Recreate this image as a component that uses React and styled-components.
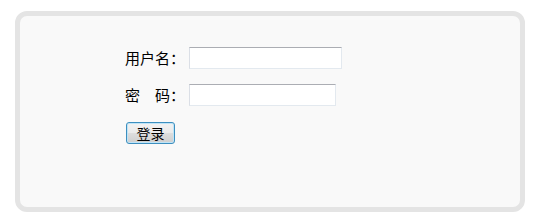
import styled, { createGlobalStyle } from 'styled-components'

const GlobalStyle = createGlobalStyle`
  html, body {
    margin: 0;
    padding: 0;
    background: #ffffff;
  }
  body {
    font-family: "Noto Sans CJK SC", "Liberation Sans", sans-serif;
  }
`

const Panel = styled.div`
  box-sizing: border-box;
  width: 510px;
  height: 201px;
  margin: 11px 0 0 15px;
  border: 5px solid #e4e4e4;
  border-radius: 12px;
  background: #f9f9f9;
  padding: 31px 0 0 105px;
`

const Form = styled.form`
  display: flex;
  flex-direction: column;
  align-items: flex-start;
  gap: 15px;
  margin: 0;
`

const Row = styled.div`
  display: flex;
  align-items: center;
  gap: 4px;
  height: 22px;
`

const Label = styled.label`
  width: 60px;
  font-size: 15px;
  line-height: 22px;
  color: #000;
  white-space: pre;
`

const Input = styled.input`
  box-sizing: border-box;
  width: ${p => p.$w}px;
  height: 22px;
  margin: 0;
  padding: 1px 3px;
  font-size: 13px;
  background: #fff;
  border: 1px solid #e3e9ef;
  border-top-color: #abadb3;
  border-left-color: #dbdfe6;
  outline: none;
`

const Button = styled.button`
  box-sizing: border-box;
  width: 49px;
  height: 22px;
  margin: 1px 0 0 1px;
  padding: 0;
  font-family: "Noto Sans CJK SC", sans-serif;
  font-size: 14px;
  line-height: 18px;
  color: #000;
  border: 1px solid #3d8fbf;
  border-radius: 3px;
  box-shadow: inset 0 0 0 1px #bfe4f7;
  background: linear-gradient(#f2f2f2 0%, #ebebeb 48%, #dddddd 52%, #cfcfcf 100%);
`

export default function App () {
  return (
    <>
      <GlobalStyle />
      <Panel>
        <Form onSubmit={e => e.preventDefault()}>
          <Row>
            <Label>用户名：</Label>
            <Input type='text' $w={153} />
          </Row>
          <Row>
            <Label>密　码：</Label>
            <Input type='password' $w={147} />
          </Row>
          <Button type='submit'>登录</Button>
        </Form>
      </Panel>
    </>
  )
}
